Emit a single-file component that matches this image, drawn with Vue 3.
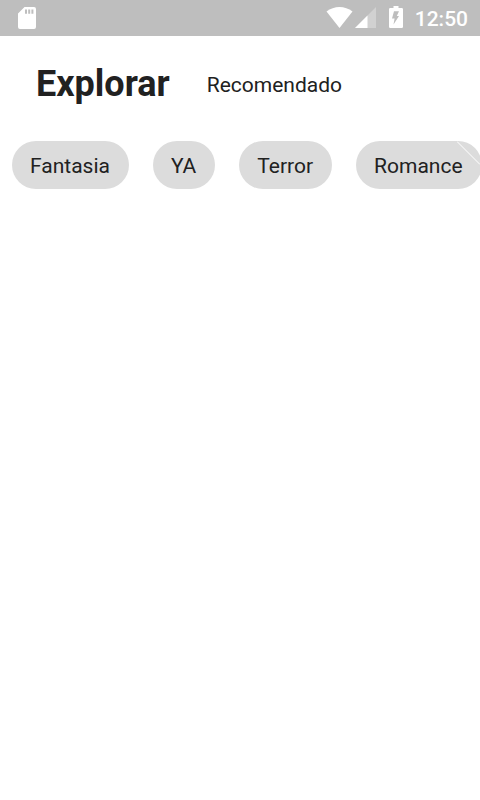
<script setup>
const genres = ['Fantasia', 'YA', 'Terror', 'Romance']
</script>

<template>
  <div class="screen">
    <div class="status">
      <svg width="18" height="22" viewBox="0 0 18 22" aria-hidden="true">
        <path fill="#fff" fill-rule="evenodd" d="M6.5 0H16a2 2 0 0 1 2 2v18a2 2 0 0 1-2 2H2a2 2 0 0 1-2-2V6.500zM7 2.400v4.400h2V2.400zM10.200 2.400v4.400h2V2.400zM13.400 2.400v4.400h2V2.400z" />
      </svg>
      <div class="system">
        <svg width="27" height="21" viewBox="0 0 27 21" aria-hidden="true">
          <path fill="#fff" d="M0.500 4.500C8 -1.500 19 -1.500 26.500 4.500L13.500 21z" />
        </svg>
        <svg class="signal" width="21" height="21" viewBox="0 0 21 21" aria-hidden="true">
          <path fill="#fff" fill-opacity=".3" d="M0 21L21 0v21z" />
          <path fill="#fff" d="M0 21L12.500 8.500V21z" />
        </svg>
        <svg class="battery" width="14" height="22" viewBox="0 0 14 22" aria-hidden="true">
          <path fill="#fff" d="M4.500 0h5v2h3.200Q14 2 14 3.300v17.400Q14 22 12.700 22H1.300Q0 22 0 20.700V3.300Q0 2 1.300 2h3.200z" />
          <path fill="#bebebe" d="M5 5.300h5L7.800 10H10L4.500 18.500L5.600 12.500H3z" />
        </svg>
        <time class="clock">12:50</time>
      </div>
    </div>
    <nav class="tabs">
      <a class="tab active" href="#explorar">Explorar</a>
      <a class="tab" href="#recomendado">Recomendado</a>
    </nav>
    <div class="chips">
      <button v-for="genre in genres" :key="genre" class="chip" type="button">{{ genre }}</button>
      <svg class="seam" width="23" height="24" viewBox="0 0 23 24" aria-hidden="true">
        <path d="M0 0.500L23 23.500" stroke="#fff" stroke-width="1" />
      </svg>
    </div>
  </div>
</template>

<style>
body {
  background: #fff;
}
</style>

<style scoped>
.screen {
  font-family: Roboto, sans-serif;
  color: #212121;
  overflow: hidden;
}
.status {
  display: flex;
  align-items: center;
  justify-content: space-between;
  height: 36px;
  padding: 0 12px 0 18px;
  background: #bebebe;
}
.system {
  display: flex;
  align-items: center;
}
.system svg {
  margin-bottom: 2px;
}
.signal {
  margin-left: 2px;
}
.battery {
  margin-left: 13px;
}
.clock {
  margin-left: 12px;
  padding-top: 2px;
  color: #fff;
  font-size: 21px;
  font-weight: 500;
  line-height: 36px;
}
.tabs {
  display: flex;
  align-items: center;
  gap: 37px;
  padding: 23px 36px 0;
}
.tab {
  padding-top: 2px;
  color: inherit;
  text-decoration: none;
  font-size: 21px;
  line-height: 48px;
}
.active {
  padding-top: 0;
  font-size: 36px;
  font-weight: 700;
}
.chips {
  position: relative;
  display: flex;
  gap: 24px;
  padding: 32px 12px 0;
}
.chip {
  flex: none;
  box-sizing: border-box;
  height: 48px;
  padding: 2px 19px 0 18px;
  border: 0;
  border-radius: 24px;
  background: #dcdcdc;
  color: inherit;
  font: 400 21px Roboto, sans-serif;
}
.seam {
  position: absolute;
  top: 32px;
  right: 0;
}
</style>
